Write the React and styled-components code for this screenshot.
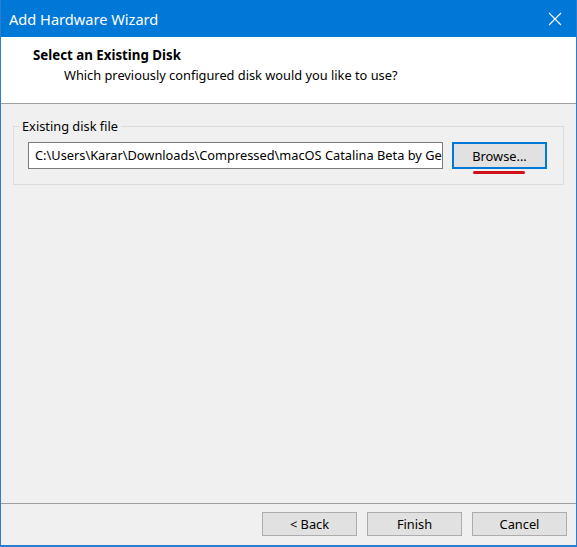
import styled, { createGlobalStyle } from "styled-components";

const GlobalStyle = createGlobalStyle`
  html, body {
    margin: 0;
    padding: 0;
    background: #f0f0f0;
  }
  * {
    box-sizing: border-box;
  }
`;

const Window = styled.div`
  width: 577px;
  height: 547px;
  display: flex;
  flex-direction: column;
  border: 1px solid #2b7cd3;
  border-top: 0;
  border-bottom-width: 2px;
  background: #f0f0f0;
  font-family: "Noto Sans", "Liberation Sans", sans-serif;
  color: #000;
  overflow: hidden;
`;

const TitleBar = styled.div`
  height: 37px;
  flex: none;
  display: flex;
  align-items: center;
  justify-content: space-between;
  background: #0078d7;
  color: #fff;
  padding: 0 14px 0 9px;
  margin: 0 -1px;
  font-size: 14.6px;
`;

const CloseButton = styled.div`
  width: 16px;
  height: 16px;
  display: flex;
  svg {
    width: 16px;
    height: 16px;
  }
`;

const Header = styled.div`
  height: 67px;
  flex: none;
  background: #fff;
  border-bottom: 1px solid #a0a0a0;
  padding: 8px 0 0 32px;
`;

const HeaderTitle = styled.div`
  font-weight: 700;
  font-size: 13.3px;
  line-height: 20px;
`;

const HeaderSub = styled.div`
  font-size: 12.8px;
  line-height: 20px;
  padding-left: 31px;
`;

const Body = styled.div`
  flex: 1;
  padding: 22px 12px 0 12px;
`;

const GroupBox = styled.fieldset`
  margin: 0;
  height: 59px;
  border: 1px solid #dcdcdc;
  border-radius: 0;
  padding: 15px 16px 0 14px;
  display: flex;
  align-items: flex-start;
  gap: 9px;
  position: relative;
`;

const Legend = styled.legend`
  position: absolute;
  top: -11px;
  left: 5px;
  padding: 0 3px;
  background: #f0f0f0;
  font-size: 12.8px;
  line-height: 20px;
`;

const PathField = styled.div`
  width: 415px;
  height: 27px;
  background: #fff;
  border: 1px solid #7a7a7a;
  padding: 0 6px;
  font-size: 12.8px;
  line-height: 25px;
  white-space: nowrap;
  overflow: hidden;
`;

const ButtonWrap = styled.div`
  position: relative;
`;

const Button = styled.div`
  width: 95px;
  height: ${(p) => (p.tall ? "27px" : "24px")};
  display: flex;
  align-items: center;
  justify-content: center;
  background: #e1e1e1;
  border: ${(p) => (p.focused ? "2px solid #0078d7" : "1px solid #adadad")};
  font-size: 12.8px;
`;

const Underline = styled.div`
  position: absolute;
  left: 21px;
  top: 29px;
  width: 52px;
  height: 3px;
  border-radius: 2px;
  background: #d0111b;
`;

const Footer = styled.div`
  height: 42px;
  flex: none;
  border-top: 1px solid #a0a0a0;
  display: flex;
  justify-content: flex-end;
  align-items: flex-start;
  gap: 10px;
  padding: 8px 9px 0 0;
`;

export default function App() {
  return (
    <>
      <GlobalStyle />
      <Window>
        <TitleBar>
          <span>Add Hardware Wizard</span>
          <CloseButton>
            <svg viewBox="0 0 16 16" fill="none" stroke="#fff" strokeWidth="1.1">
              <path d="M2 2 L14 14 M14 2 L2 14" />
            </svg>
          </CloseButton>
        </TitleBar>
        <Header>
          <HeaderTitle>Select an Existing Disk</HeaderTitle>
          <HeaderSub>Which previously configured disk would you like to use?</HeaderSub>
        </Header>
        <Body>
          <GroupBox>
            <Legend>Existing disk file</Legend>
            <PathField>
              C:\Users\Karar\Downloads\Compressed\macOS Catalina Beta by Geekrar.vmdk
            </PathField>
            <ButtonWrap>
              <Button tall focused>Browse...</Button>
              <Underline />
            </ButtonWrap>
          </GroupBox>
        </Body>
        <Footer>
          <Button>&lt; Back</Button>
          <Button>Finish</Button>
          <Button>Cancel</Button>
        </Footer>
      </Window>
    </>
  );
}
